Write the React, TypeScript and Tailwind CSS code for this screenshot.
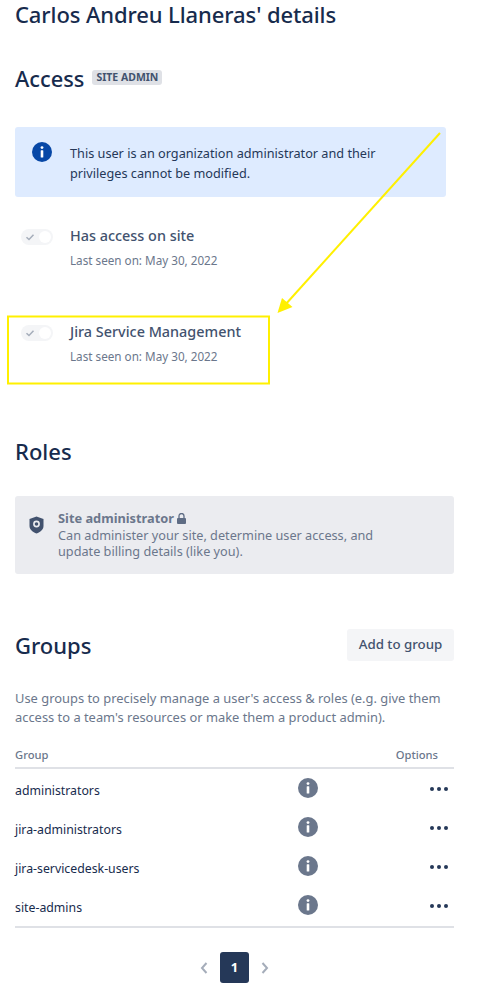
const font = { fontFamily: '"Noto Sans", "Open Sans", sans-serif' };

const groups = ["administrators", "jira-administrators", "jira-servicedesk-users", "site-admins"];

function Toggle() {
  return (
    <div className="flex h-[16px] w-[32px] shrink-0 items-center justify-between rounded-full bg-[#f4f5f7] pl-[4px] pr-[2px]">
      <svg width="10" height="10" viewBox="0 0 10 10" fill="none">
        <path d="M1.5 5.2 4 7.5 8.5 2.8" stroke="#a5adba" strokeWidth="1.5" />
      </svg>
      <span className="h-[12px] w-[12px] rounded-full bg-white" />
    </div>
  );
}

function AccessRow({ title }: { title: string }) {
  return (
    <div className="flex items-start pl-[6px]">
      <div className="pt-[1px]">
        <Toggle />
      </div>
      <div className="ml-[17px]">
        <p className="text-[14.4px] leading-[16px] font-medium text-[#42526e]">{title}</p>
        <p className="mt-[8px] mb-[1px] text-[11.7px] leading-[16px] text-[#6b778c]">Last seen on: May 30, 2022</p>
      </div>
    </div>
  );
}

function InfoDot() {
  return (
    <span className="flex h-[20px] w-[20px] items-center justify-center rounded-full bg-[#6b778c]">
      <svg width="4" height="12" viewBox="0 0 4 12" fill="#fff">
        <circle cx="2" cy="1.6" r="1.4" />
        <rect x="0.7" y="4.2" width="2.6" height="7.4" rx="0.6" />
      </svg>
    </span>
  );
}

export default function App() {
  return (
    <div className="relative h-[999px] w-[479px] overflow-hidden bg-white px-[15px] text-[#172b4d]" style={font}>
      <h1 className="text-[22px] leading-[28px] font-medium tracking-[-0.1px]">Carlos Andreu Llaneras' details</h1>

      <div className="mt-[35px] flex items-center">
        <h2 className="text-[21.8px] leading-[32px] font-medium">Access</h2>
        <span className="ml-[8px] mb-[3px] rounded-[3px] bg-[#dfe1e6] px-[4px] text-[10.5px] leading-[15px] font-bold text-[#42526e]">
          SITE ADMIN
        </span>
      </div>

      {/* Info banner */}
      <div className="mt-[32px] flex h-[70px] w-[431px] items-start rounded-[3px] bg-[#deebff] pt-[15px] pl-[17px]">
        <span className="flex h-[20px] w-[20px] shrink-0 items-center justify-center rounded-full bg-[#0747a6]">
          <svg width="4" height="12" viewBox="0 0 4 12" fill="#fff">
            <circle cx="2" cy="1.6" r="1.4" />
            <rect x="0.7" y="4.2" width="2.6" height="7.4" rx="0.6" />
          </svg>
        </span>
        <p className="ml-[18px] pt-[1px] text-[12.7px] leading-[20px] text-[#253858]">
          This user is an organization administrator and their
          <br />
          privileges cannot be modified.
        </p>
      </div>

      <div className="mt-[31px] flex flex-col gap-[55px]">
        <AccessRow title="Has access on site" />
        <AccessRow title="Jira Service Management" />
      </div>

      <h2 className="mt-[70px] text-[22px] leading-[32px] font-medium">Roles</h2>

      {/* Role card */}
      <div className="mt-[29px] flex h-[78px] w-[439px] items-start rounded-[3px] bg-[#ebecf0] pt-[14px] pl-[14px]">
        <svg className="mt-[6px] shrink-0" width="15" height="18" viewBox="0 0 15 18">
          <path d="M7.5 0.5 14.5 3v7c0 3.6-3.2 6-7 7.5C3.7 16 .5 13.6.5 10V3z" fill="#42526e" />
          <circle cx="7.5" cy="8" r="2.6" fill="none" stroke="#ebecf0" strokeWidth="1.6" />
        </svg>
        <div className="ml-[14px] text-[12.7px] leading-[16px] text-[#6b778c]">
          <p className="mb-[1px] flex h-[16px] items-center text-[12.8px] font-bold">
            Site administrator
            <svg className="ml-[3px]" width="9" height="11" viewBox="0 0 9 11" fill="#5e6c84">
              <path d="M1 5h7a1 1 0 0 1 1 1v4a1 1 0 0 1-1 1H1a1 1 0 0 1-1-1V6a1 1 0 0 1 1-1z" />
              <path d="M2 5V3a2.500 2.500 0 0 1 5 0v2" fill="none" stroke="#5e6c84" strokeWidth="1.3" />
            </svg>
          </p>
          <p>
            Can administer your site, determine user access, and
            <br />
            update billing details (like you).
          </p>
        </div>
      </div>

      <div className="mt-[55px] flex w-[439px] items-center justify-between">
        <h2 className="text-[22px] leading-[32px] font-medium">Groups</h2>
        <button className="h-[32px] w-[107px] rounded-[3px] bg-[#f4f5f7] text-[13.3px] font-medium text-[#42526e]">
          Add to group
        </button>
      </div>

      <p className="mt-[28px] text-[12.9px] leading-[19px] text-[#6b778c]">
        Use groups to precisely manage a user's access &amp; roles (e.g. give them
        <br />
        access to a team's resources or make them a product admin).
      </p>

      {/* Groups table */}
      <div className="mt-[20px] w-[439px]">
        <div className="flex h-[22px] items-center justify-between border-b-2 border-[#dfe1e6] pb-[3px] text-[11.2px] font-medium text-[#6b778c]">
          <span>Group</span>
          <span className="mr-[16px]">Options</span>
        </div>
        <div className="border-b-2 border-[#dfe1e6] pt-[1px]">
          {groups.map((g) => (
            <div key={g} className="flex h-[39px] items-center text-[12.3px] text-[#172b4d]">
              <span className="mt-[4px] w-[283px]">{g}</span>
              <span className="-mt-[4px]">
                <InfoDot />
              </span>
              <span className="-mt-[2px] ml-auto mr-[6px] flex gap-[3px]">
                <span className="h-[4px] w-[4px] rounded-full bg-[#253858]" />
                <span className="h-[4px] w-[4px] rounded-full bg-[#253858]" />
                <span className="h-[4px] w-[4px] rounded-full bg-[#253858]" />
              </span>
            </div>
          ))}
        </div>
      </div>

      {/* Pagination */}
      <div className="mt-[24px] ml-[185px] flex items-center">
        <svg width="10" height="14" viewBox="0 0 10 14" fill="none">
          <path d="M6.5 2 2 7l4.5 5" stroke="#a5adba" strokeWidth="2" />
        </svg>
        <span className="mx-[10px] flex h-[31px] w-[29px] items-center justify-center rounded-[3px] bg-[#253858] text-[13px] font-bold text-white">
          1
        </span>
        <svg width="10" height="14" viewBox="0 0 10 14" fill="none">
          <path d="M3.500 2 8 7l-4.500 5" stroke="#a5adba" strokeWidth="2" />
        </svg>
      </div>

      {/* Yellow annotation drawn over the page */}
      <svg className="absolute top-0 left-0" width="479" height="999" viewBox="0 0 479 999" fill="none">
        <path d="M440 133 285 305" stroke="#fff000" strokeWidth="2" />
        <path d="M277.5 313 282 298 292.500 307z" fill="#fff000" />
        <rect x="8" y="316.500" width="261" height="67" stroke="#fff000" strokeWidth="2" />
      </svg>
    </div>
  );
}
